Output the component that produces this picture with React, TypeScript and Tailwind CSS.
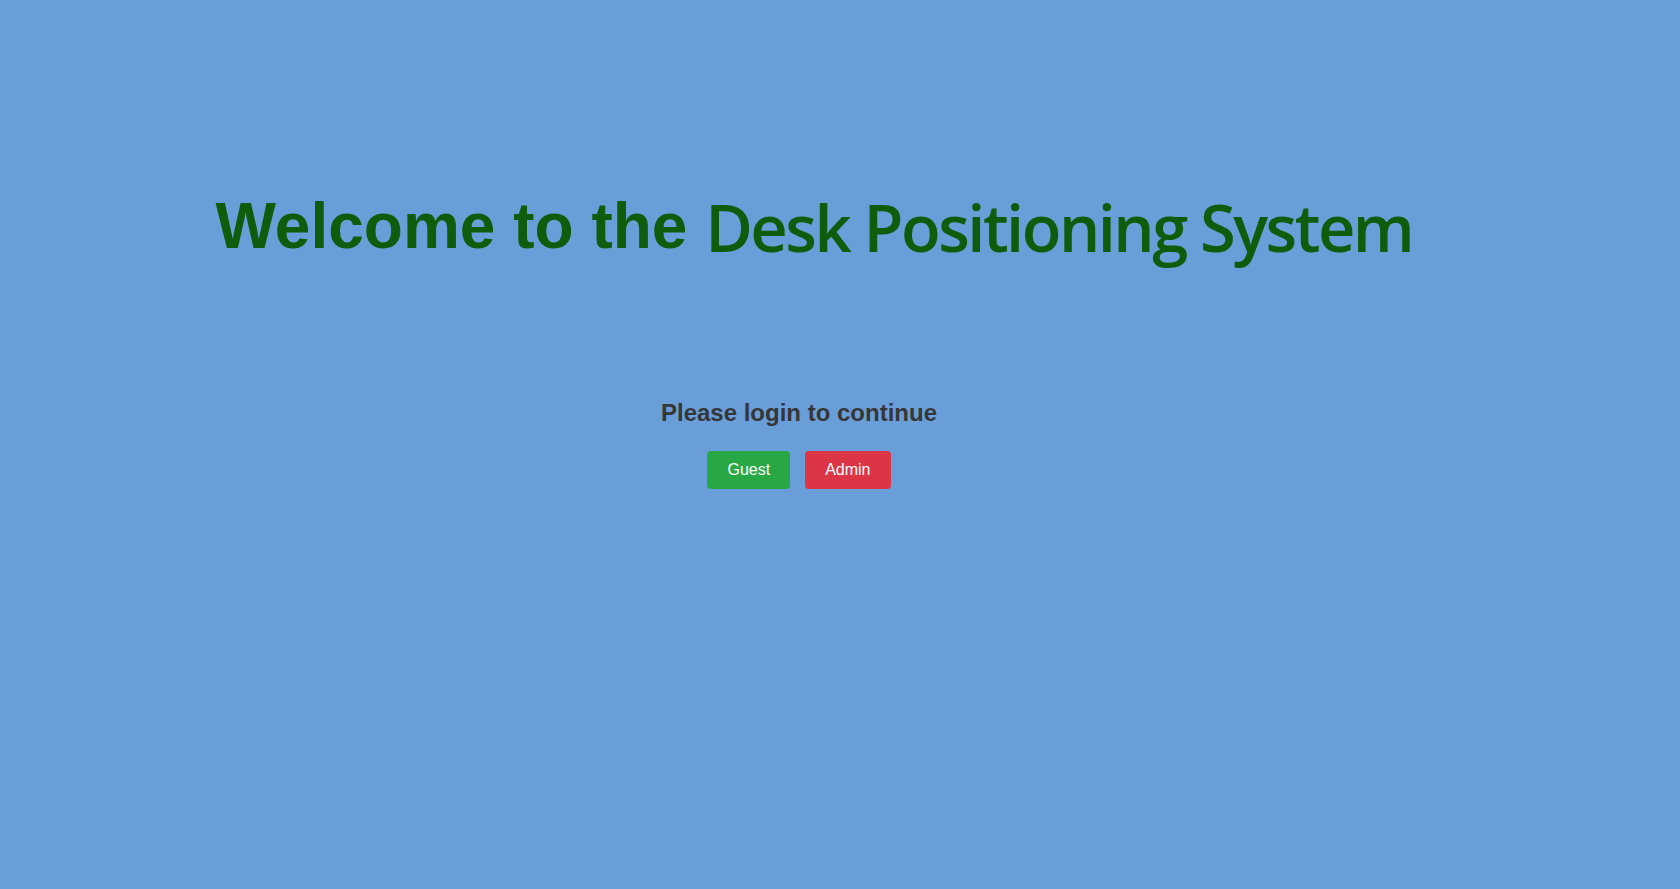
import React from "react";

export default function App() {
  return (
    <div className="min-h-screen w-full bg-[#699ed9] flex flex-col" style={{ fontFamily: '"Liberation Sans", Arial, sans-serif' }}>
      {/* Title */}
      <div className="pt-[181px] pr-[52px] flex justify-center">
        <h1 className="text-[#105c0c] leading-[90px] whitespace-nowrap">
          <span className="text-[64px] font-bold" style={{ fontFamily: '"Liberation Sans", Arial, sans-serif' }}>
            Welcome to the{" "}
          </span>
          <span className="text-[65px] font-semibold tracking-[-2.5px] align-[-4px]" style={{ fontFamily: '"Open Sans", "Noto Sans", sans-serif' }}>
            Desk Positioning System
          </span>
        </h1>
      </div>

      {/* Login */}
      <div className="mt-[111px] pr-[82px] flex flex-col items-center">
        <h2 className="text-[24px] font-bold text-[#363636] leading-[28px]">Please login to continue</h2>
        <div className="mt-[24px] flex gap-[15px]">
          <button className="bg-[#28a745] text-white text-[16px] leading-[18px] px-5 py-[10px] rounded-[4px]">Guest</button>
          <button className="bg-[#dc3545] text-white text-[16px] leading-[18px] px-5 py-[10px] rounded-[4px]">Admin</button>
        </div>
      </div>
    </div>
  );
}
